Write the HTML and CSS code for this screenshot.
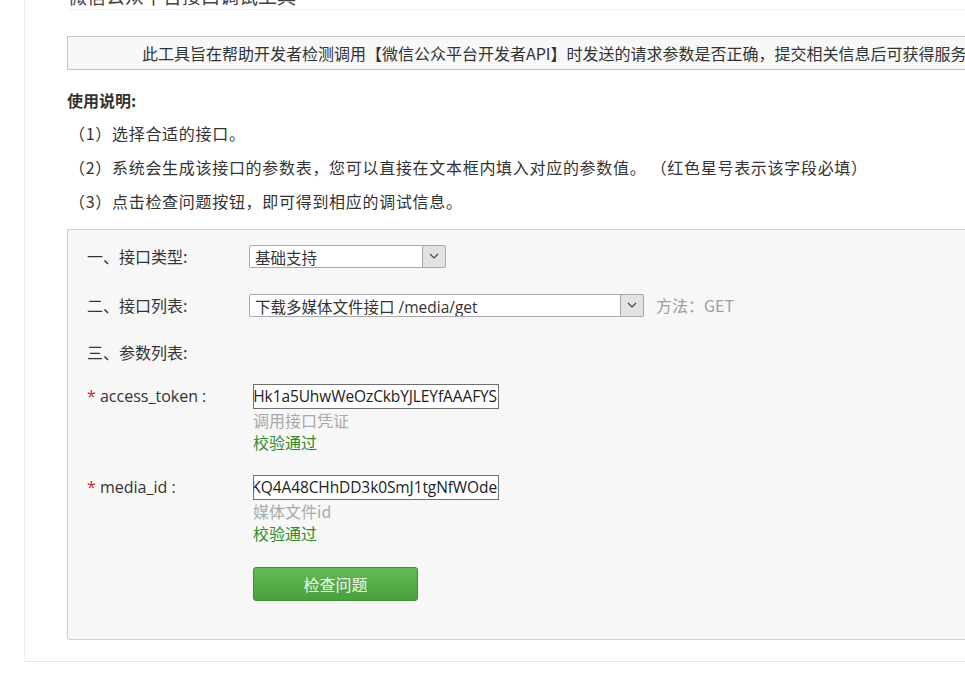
FILE: index.html
```html
<!DOCTYPE html>
<html lang="zh-CN">
<head>
<meta charset="utf-8">
<title>微信公众平台接口调试工具</title>
<link rel="stylesheet" href="styles.css">
</head>
<body>
<div class="page">
  <h1 class="title">微信公众平台接口调试工具</h1>
  <div class="intro">此工具旨在帮助开发者检测调用【微信公众平台开发者API】时发送的请求参数是否正确，提交相关信息后可获得服务器的验证结果</div>
  <div class="usage">
    <div class="usage-title">使用说明:</div>
    <ul class="usage-list">
      <li>（1）选择合适的接口。</li>
      <li>（2）系统会生成该接口的参数表，您可以直接在文本框内填入对应的参数值。 （红色星号表示该字段必填）</li>
      <li>（3）点击检查问题按钮，即可得到相应的调试信息。</li>
    </ul>
  </div>
  <div class="panel">
    <div class="row row-type">
      <div class="label">一、接口类型:</div>
      <div class="select select-short">
        <span class="select-text">基础支持</span>
        <span class="select-arrow"><svg width="10" height="6" viewBox="0 0 10 6"><path d="M1 1 L5 5 L9 1" fill="none" stroke="#444" stroke-width="1.2"/></svg></span>
      </div>
    </div>
    <div class="row row-list">
      <div class="label">二、接口列表:</div>
      <div class="select select-long">
        <span class="select-text">下载多媒体文件接口 /media/get</span>
        <span class="select-arrow"><svg width="10" height="6" viewBox="0 0 10 6"><path d="M1 1 L5 5 L9 1" fill="none" stroke="#444" stroke-width="1.2"/></svg></span>
      </div>
      <div class="method">方法：GET</div>
    </div>
    <div class="row row-params">
      <div class="label">三、参数列表:</div>
    </div>
    <div class="param param-first">
      <div class="label param-label"><span class="req">*</span> access_token :</div>
      <div class="param-body">
        <div class="input"><span class="input-text">1kAbHk1a5UhwWeOzCkbYJLEYfAAAFYS</span></div>
        <div class="hint">调用接口凭证</div>
        <div class="ok">校验通过</div>
      </div>
    </div>
    <div class="param">
      <div class="label param-label"><span class="req">*</span> media_id :</div>
      <div class="param-body">
        <div class="input"><span class="input-text">2fKQ4A48CHhDD3k0SmJ1tgNfWOde</span></div>
        <div class="hint">媒体文件id</div>
        <div class="ok">校验通过</div>
        <button class="btn" type="button">检查问题</button>
      </div>
    </div>
  </div>
</div>
</body>
</html>
```
FILE: styles.css
```css
html, body {
  margin: 0;
  padding: 0;
  overflow: hidden;
  background: #fff;
}
body {
  font-family: "Open Sans", "Noto Sans CJK SC", sans-serif;
  color: #333;
  font-size: 16px;
  width: 965px;
  height: 676px;
  text-spacing-trim: space-all;
}
.page {
  display: flow-root;
  margin-left: 24px;
  width: 1100px;
  height: 662px;
  box-sizing: border-box;
  border-left: 1px solid #ececec;
  border-bottom: 1px solid #e6e6e6;
  padding-left: 42px;
}
.title {
  margin: -15px 0 0 1px;
  font-size: 19px;
  font-weight: normal;
  line-height: 24px;
  height: 24px;
  border-bottom: 1px solid #efefef;
  color: #444;
}
.intro {
  margin-top: 26px;
  height: 32px;
  line-height: 32px;
  border: 1px solid #c4c4c4;
  background: #f8f8f8;
  padding-left: 74px;
  white-space: nowrap;
  overflow: hidden;
  font-family: "Noto Sans CJK SC", sans-serif;
  font-size: 16px;
  color: #333;
}
.usage {
  margin-top: 18px;
}
.usage-title {
  font-family: "Noto Sans CJK SC", sans-serif;
  font-weight: bold;
  line-height: 24px;
  font-size: 16px;
}
.usage-list {
  list-style: none;
  margin: 4px 0 0 0;
  padding: 0 0 0 2px;
  font-family: "Noto Sans CJK SC", sans-serif;
}
.usage-list li {
  line-height: 34px;
  white-space: pre;
  font-size: 16px;
  letter-spacing: 0.7px;
}
.panel {
  margin-top: 11px;
  border: 1px solid #cfcfcf;
  border-radius: 0 0 0 3px;
  background: #f7f7f7;
  padding: 14px 0 38px 19px;
}
.row {
  display: flex;
  align-items: center;
  height: 24px;
}
.row-list { margin-top: 25px; }
.row-params { margin-top: 23px; }
.label {
  width: 162px;
  flex: none;
  line-height: 24px;
  font-family: "Noto Sans CJK SC", sans-serif;
  white-space: nowrap;
}
.select {
  display: flex;
  height: 23px;
  box-sizing: border-box;
  border: 1px solid #a9a9a9;
  border-radius: 2px;
  background: #fff;
  font-family: "Open Sans", "Noto Sans CJK SC", sans-serif;
}
.select-short { width: 197px; }
.select-long { width: 395px; }
.select-text {
  flex: 1;
  padding-left: 5px;
  line-height: 25px;
  font-size: 15.5px;
  white-space: nowrap;
  overflow: hidden;
}
.select-arrow {
  flex: none;
  width: 22px;
  margin: -1px -1px -1px 0;
  border: 1px solid #a9a9a9;
  border-radius: 2px;
  background: #e2e2e2;
  display: flex;
  align-items: center;
  justify-content: center;
}
.method {
  margin-left: 12px;
  color: #a0a0a0;
  font-family: "Noto Sans CJK SC", sans-serif;
  white-space: nowrap;
}
.param {
  display: flex;
  margin-top: 22px;
}
.param-first { margin-top: 20px; }
.param-label {
  line-height: 25px;
  font-family: "Open Sans", sans-serif;
  font-size: 16px;
}
.req {
  color: #c7262d;
}
.param-body {
  margin-left: 4px;
  display: flex;
  flex-direction: column;
  align-items: flex-start;
}
.input {
  width: 246px;
  height: 25px;
  box-sizing: border-box;
  border: 1px solid #707070;
  background: #fff;
  display: flex;
  justify-content: flex-end;
  overflow: hidden;
  white-space: nowrap;
  padding-right: 1px;
}
.input-text {
  line-height: 23px;
  font-family: "Open Sans", sans-serif;
  font-size: 15.5px;
  letter-spacing: -0.1px;
  color: #222;
}
.hint {
  line-height: 22px;
  color: #a9a9a9;
  font-family: "Noto Sans CJK SC", sans-serif;
}
.ok {
  line-height: 22px;
  color: #2e8b2a;
  font-family: "Noto Sans CJK SC", sans-serif;
}
.btn {
  margin-top: 23px;
  width: 165px;
  height: 34px;
  border: 1px solid #3f8f35;
  border-radius: 3px;
  background: linear-gradient(#62ba55, #4a9f3e);
  color: #eef8ea;
  font-family: "Noto Sans CJK SC", sans-serif;
  font-size: 16px;
  padding: 0;
}
```
